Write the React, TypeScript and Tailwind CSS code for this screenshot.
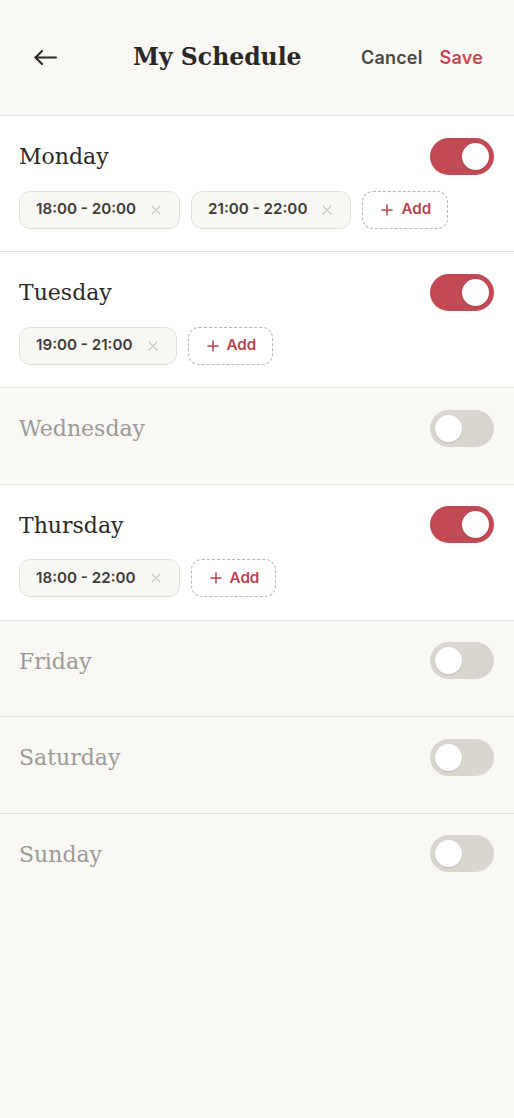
import React, { useState } from "react";

type Slot = { id: number; label: string };
type Day = { name: string; on: boolean; slots: Slot[] };

const initialDays: Day[] = [
  { name: "Monday", on: true, slots: [{ id: 1, label: "18:00 - 20:00" }, { id: 2, label: "21:00 - 22:00" }] },
  { name: "Tuesday", on: true, slots: [{ id: 3, label: "19:00 - 21:00" }] },
  { name: "Wednesday", on: false, slots: [] },
  { name: "Thursday", on: true, slots: [{ id: 4, label: "18:00 - 22:00" }] },
  { name: "Friday", on: false, slots: [] },
  { name: "Saturday", on: false, slots: [] },
  { name: "Sunday", on: false, slots: [] },
];

const serif = "font-['DejaVu_Serif','Liberation_Serif',serif]";
const sans = "font-['Inter','Liberation_Sans',sans-serif]";

const Toggle: React.FC<{ on: boolean; onClick: () => void }> = ({ on, onClick }) => (
  <button
    onClick={onClick}
    className={`flex h-[37px] w-[64px] shrink-0 items-center rounded-full px-[5px] ${
      on ? "justify-end bg-[#c14a55]" : "justify-start bg-[#d9d6cf]"
    }`}
  >
    <span className="block h-[27px] w-[27px] rounded-full bg-white shadow-[0_1px_2px_rgba(0,0,0,0.12)]" />
  </button>
);

export default function App() {
  const [days, setDays] = useState<Day[]>(initialDays);

  const toggleDay = (i: number) => {
    setDays((d) => d.map((day, idx) => (idx === i ? { ...day, on: !day.on } : day)));
  };

  const removeSlot = (i: number, id: number) => {
    setDays((d) => d.map((day, idx) => (idx === i ? { ...day, slots: day.slots.filter((s) => s.id !== id) } : day)));
  };

  return (
    <div className="min-h-[1118px] w-full bg-[#f9f8f5]">
      {/* header */}
      <div className="flex h-[115px] items-center bg-[#f9f8f4] pl-[34px] pr-[31px]">
        <button className="flex h-[24px] w-[23px] items-center">
          <svg width="23" height="15" viewBox="0 0 23 15" fill="none" stroke="#2a2724" strokeWidth="2" strokeLinecap="round" strokeLinejoin="round">
            <path d="M22 7.5H1.5" />
            <path d="M8 1L1.5 7.5L8 14" />
          </svg>
        </button>
        <h1 className={`ml-[76px] text-[23.5px] font-bold leading-none text-[#2a2724] ${serif}`}>My Schedule</h1>
        <div className={`ml-auto flex items-center gap-[17px] text-[18px] font-semibold tracking-[0.2px] ${sans}`}>
          <button className="text-[#4a4843]">Cancel</button>
          <button className="text-[#c14a55]">Save</button>
        </div>
      </div>

      {/* days */}
      <div>
        {days.map((day, i) => (
          <div
            key={day.name}
            className={`border-t border-[#e4e1dc] pl-[19px] pr-[20px] pt-[21.5px] ${
              day.on ? "bg-white pb-[22.5px]" : "bg-[#f9f8f5] pb-[37px]"
            }`}
          >
            <div className="flex items-center justify-between">
              <span className={`translate-y-[1px] text-[22px] leading-none ${serif} ${day.on ? "text-[#2b2825]" : "text-[#9c9a95]"}`}>
                {day.name}
              </span>
              <Toggle on={day.on} onClick={() => toggleDay(i)} />
            </div>
            {day.on && (
              <div className={`mt-[16px] flex flex-wrap gap-[11px] ${sans}`}>
                {day.slots.map((s) => (
                  <div
                    key={s.id}
                    className="flex h-[38px] items-center rounded-[11px] border border-[#e3e0d9] bg-[#f8f7f3] pl-[16px] pr-[18px]"
                  >
                    <span className="text-[15.2px] font-semibold text-[#403d38]">{s.label}</span>
                    <button onClick={() => removeSlot(i, s.id)} className="ml-[15px] flex items-center">
                      <svg width="10" height="10" viewBox="0 0 10 10" stroke="#cbc8c1" strokeWidth="1.4" strokeLinecap="round">
                        <path d="M1 1L9 9M9 1L1 9" />
                      </svg>
                    </button>
                  </div>
                ))}
                <button className="flex h-[38px] items-center gap-[8px] rounded-[11px] border border-dashed border-[#b9b5ae] bg-white pl-[18px] pr-[16px] text-[15.2px] font-semibold text-[#b8434f]">
                  <svg width="12" height="12" viewBox="0 0 12 12" stroke="#b8434f" strokeWidth="1.5" strokeLinecap="round">
                    <path d="M6 1V11M1 6H11" />
                  </svg>
                  Add
                </button>
              </div>
            )}
          </div>
        ))}
      </div>
    </div>
  );
}
